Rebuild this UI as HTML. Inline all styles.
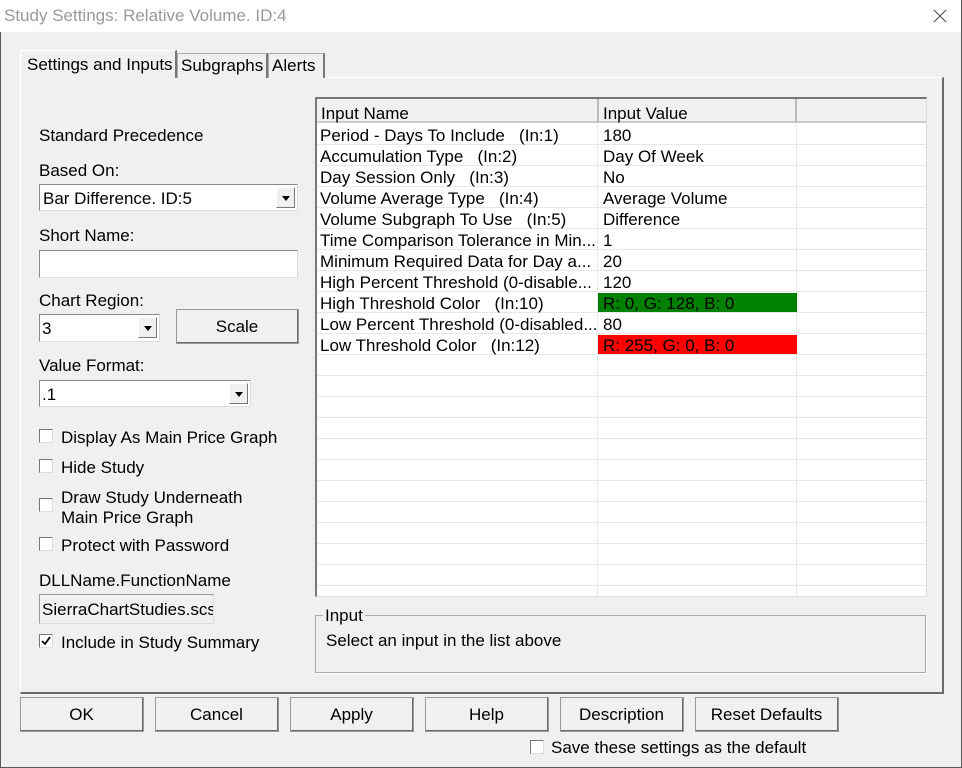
<!DOCTYPE html>
<html><head><meta charset="utf-8"><style>
*{margin:0;padding:0;box-sizing:border-box}
body{width:962px;height:768px;background:#f0f0f0;font-family:"Liberation Sans",Arial,sans-serif;font-size:17px;color:#000;position:relative;overflow:hidden}
.a{position:absolute}
.t{position:absolute;line-height:18px;white-space:nowrap;margin-top:2px}
.win{left:0;top:0;width:962px;height:768px;border:1px solid #5a5a5a;border-top:none}
.title{left:0;top:0;width:961px;height:32px;background:#fff;color:#999;font-size:17px;line-height:32px;padding-left:4px}
.panel{left:20px;top:77px;width:924px;height:617px;border:1px solid #fff;border-right:2px solid #6a6a6a;border-bottom:2px solid #6a6a6a}
.tab{top:53px;height:25px;border:1px solid #aaa;border-bottom:none;background:#f0f0f0;line-height:24px;padding-left:3px;border-right:2px solid #777}
.sunk{background:#fff;border:1px solid #888;border-right-color:#ddd;border-bottom-color:#ddd}
.btn{background:#f0f0f0;border:1px solid #fff;border-right:2px solid #6a6a6a;border-bottom:2px solid #6a6a6a;text-align:center;line-height:33px;outline:1px solid #999;outline-offset:-1px}
.dd{width:19px;height:21px;top:2px;right:2px;border:1px solid #fff;border-right:1px solid #777;border-bottom:1px solid #777;background:#f0f0f0}
.dd:after{content:"";position:absolute;left:5px;top:8px;border-left:4px solid transparent;border-right:4px solid transparent;border-top:5px solid #000}
.cb{width:14px;height:14px;background:#fff;border:1px solid #777;border-right-color:#ddd;border-bottom-color:#ddd}
.grid{left:315px;top:97px;width:612px;height:500px;border:2px solid #777;border-right:1px solid #ddd;border-bottom:1px solid #ddd;background:#fff;overflow:hidden}
.row{position:absolute;left:0;height:21px;width:610px;border-bottom:1px solid #e8e8e8}
.row span{position:absolute;top:3px;line-height:18px;white-space:nowrap}
.c1{left:3px}.c2{left:286px}
.vl{position:absolute;top:25px;width:1px;height:480px;background:#e8e8e8}
</style></head><body>
<div class="a win"></div>
<div class="a title">Study Settings: Relative Volume. ID:4</div>
<svg class="a" style="left:933px;top:9px" width="14" height="14"><path d="M1 1L13 13M13 1L1 13" stroke="#555" stroke-width="1.2"/></svg>

<div class="a panel"></div>
<div class="a tab" style="left:20px;top:50px;width:157px;height:28px;border-color:#fff;border-right:2px solid #777;background:#f0f0f0;line-height:27px;padding-left:6px;z-index:2">Settings and Inputs</div>
<div class="a tab" style="left:177px;width:91px">Subgraphs</div>
<div class="a tab" style="left:268px;width:57px">Alerts</div>

<div class="t" style="left:39px;top:125px">Standard Precedence</div>
<div class="t" style="left:39px;top:160px">Based On:</div>
<div class="a sunk" style="left:39px;top:184px;width:259px;height:27px"><div class="t" style="left:3px;top:3px">Bar Difference. ID:5</div><div class="a dd"></div></div>
<div class="t" style="left:39px;top:225px">Short Name:</div>
<div class="a sunk" style="left:39px;top:250px;width:259px;height:28px"></div>
<div class="t" style="left:39px;top:290px">Chart Region:</div>
<div class="a sunk" style="left:39px;top:314px;width:121px;height:28px"><div class="t" style="left:2px;top:3px">3</div><div class="a dd"></div></div>
<div class="a btn" style="left:176px;top:309px;width:123px;height:35px;line-height:34px">Scale</div>
<div class="t" style="left:39px;top:355px">Value Format:</div>
<div class="a sunk" style="left:39px;top:380px;width:212px;height:27px"><div class="t" style="left:2px;top:3px">.1</div><div class="a dd"></div></div>

<div class="a cb" style="left:39px;top:429px"></div><div class="t" style="left:61px;top:427px">Display As Main Price Graph</div>
<div class="a cb" style="left:39px;top:459px"></div><div class="t" style="left:61px;top:457px">Hide Study</div>
<div class="a cb" style="left:39px;top:498px"></div><div class="t" style="left:61px;top:487px">Draw Study Underneath</div><div class="t" style="left:61px;top:507px">Main Price Graph</div>
<div class="a cb" style="left:39px;top:537px"></div><div class="t" style="left:61px;top:535px">Protect with Password</div>
<div class="t" style="left:39px;top:570px">DLLName.FunctionName</div>
<div class="a" style="left:39px;top:594px;width:175px;height:30px;border:1px solid #999;border-right-color:#ddd;border-bottom-color:#ddd;overflow:hidden"><div class="t" style="left:2px;top:4px">SierraChartStudies.scsf</div></div>
<div class="a cb" style="left:39px;top:634px"><svg width="12" height="12" style="position:absolute;left:0;top:0"><path d="M2 6L5 9L10 2" stroke="#000" stroke-width="1.8" fill="none"/></svg></div><div class="t" style="left:61px;top:632px">Include in Study Summary</div>

<div class="a grid">
<div class="a" style="left:0;top:0;width:610px;height:24px;background:#f0f0f0;border-bottom:2px solid #ccc"></div>
<div class="a" style="left:280px;top:0;width:2px;height:24px;background:#bbb"></div>
<div class="a" style="left:478px;top:0;width:2px;height:24px;background:#bbb"></div>
<div class="t" style="left:4px;top:4px">Input Name</div>
<div class="t" style="left:286px;top:4px">Input Value</div>
<div class="vl" style="left:280px"></div><div class="vl" style="left:479px"></div>
<div class="row" style="top:25px"><span class="c1">Period - Days To Include &nbsp;&nbsp;(In:1)</span><span class="c2">180</span></div>
<div class="row" style="top:46px"><span class="c1">Accumulation Type &nbsp;&nbsp;(In:2)</span><span class="c2">Day Of Week</span></div>
<div class="row" style="top:67px"><span class="c1">Day Session Only &nbsp;&nbsp;(In:3)</span><span class="c2">No</span></div>
<div class="row" style="top:88px"><span class="c1">Volume Average Type &nbsp;&nbsp;(In:4)</span><span class="c2">Average Volume</span></div>
<div class="row" style="top:109px"><span class="c1">Volume Subgraph To Use &nbsp;&nbsp;(In:5)</span><span class="c2">Difference</span></div>
<div class="row" style="top:130px"><span class="c1">Time Comparison Tolerance in Min...</span><span class="c2">1</span></div>
<div class="row" style="top:151px"><span class="c1">Minimum Required Data for Day a...</span><span class="c2">20</span></div>
<div class="row" style="top:172px"><span class="c1">High Percent Threshold (0-disable...</span><span class="c2">120</span></div>
<div class="row" style="top:193px"><span class="c1">High Threshold Color &nbsp;&nbsp;(In:10)</span><div class="a" style="left:281px;top:1px;width:199px;height:19px;background:#008000"></div><span class="c2">R: 0, G: 128, B: 0</span></div>
<div class="row" style="top:214px"><span class="c1">Low Percent Threshold (0-disabled...</span><span class="c2">80</span></div>
<div class="row" style="top:235px"><span class="c1">Low Threshold Color &nbsp;&nbsp;(In:12)</span><div class="a" style="left:281px;top:1px;width:199px;height:19px;background:#f00"></div><span class="c2">R: 255, G: 0, B: 0</span></div>
<div class="row" style="top:256px"></div><div class="row" style="top:277px"></div><div class="row" style="top:298px"></div><div class="row" style="top:319px"></div><div class="row" style="top:340px"></div><div class="row" style="top:361px"></div><div class="row" style="top:382px"></div><div class="row" style="top:403px"></div><div class="row" style="top:424px"></div><div class="row" style="top:445px"></div><div class="row" style="top:466px"></div><div class="row" style="top:487px"></div>
</div>

<div class="a" style="left:315px;top:615px;width:611px;height:58px;border:1px solid #aaa;box-shadow:1px 1px 0 #fff"></div>
<div class="t" style="left:323px;top:605px;background:#f0f0f0;padding:0 2px">Input</div>
<div class="t" style="left:326px;top:630px">Select an input in the list above</div>

<div class="a btn" style="left:20px;top:697px;width:124px;height:35px">OK</div>
<div class="a btn" style="left:155px;top:697px;width:124px;height:35px">Cancel</div>
<div class="a btn" style="left:290px;top:697px;width:124px;height:35px">Apply</div>
<div class="a btn" style="left:425px;top:697px;width:124px;height:35px">Help</div>
<div class="a btn" style="left:560px;top:697px;width:124px;height:35px">Description</div>
<div class="a btn" style="left:695px;top:697px;width:144px;height:35px">Reset Defaults</div>
<div class="a cb" style="left:530px;top:740px"></div><div class="t" style="left:551px;top:737px">Save these settings as the default</div>
</body></html>
